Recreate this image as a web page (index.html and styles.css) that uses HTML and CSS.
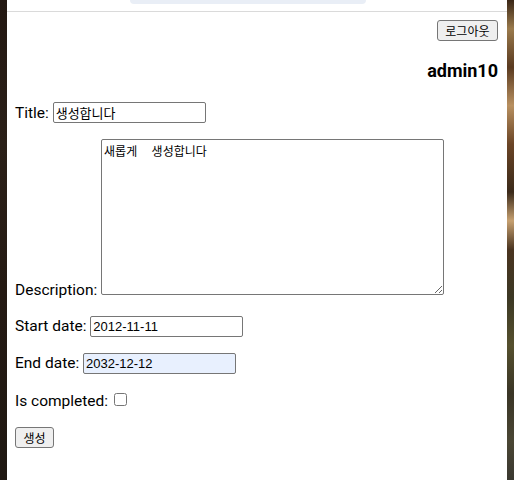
FILE: index.html
```html
<!DOCTYPE html>
<html lang="ko">
<head>
<meta charset="utf-8">
<title>Todo 생성</title>
<link rel="stylesheet" href="styles.css">
</head>
<body>
<div class="frame">
  <div class="side side-left"></div>
  <div class="main">
    <div class="topbar"><div class="pill"></div></div>
    <div class="content">
      <div class="header">
        <button class="btn" type="button">로그아웃</button>
        <div class="user">admin10</div>
      </div>
      <form class="form">
        <p class="row">Title: <input class="field" type="text" value="생성합니다"></p>
        <p class="row">Description: <textarea class="area">새롭게  생성합니다</textarea></p>
        <p class="row">Start date: <input class="field" type="text" value="2012-11-11"></p>
        <p class="row">End date: <input class="field autofill" type="text" value="2032-12-12"></p>
        <p class="row">Is completed: <input class="check" type="checkbox"></p>
        <p class="row"><button class="btn" type="button">생성</button></p>
      </form>
    </div>
  </div>
  <div class="side side-right"></div>
</div>
</body>
</html>
```

FILE: styles.css
```css
html, body {
  margin: 0;
  padding: 0;
  height: 100%;
}
body {
  font-family: Roboto, "Noto Sans CJK KR", sans-serif;
  font-size: 15.5px;
  color: #000;
  background: #1e150f;
}
.frame {
  display: flex;
  height: 480px;
  overflow: hidden;
}
.side {
  flex: 0 0 7px;
}
.side-left {
  background: linear-gradient(180deg, #231812 0%, #2b2018 30%, #251a13 60%, #1f1812 100%);
}
.side-right {
  background: linear-gradient(180deg,
    #3a2616 0%, #9a7a4c 6%, #5a3a20 14%, #b89060 22%, #6b4526 30%,
    #3b2a1a 40%, #c6a070 46%, #4a3420 52%, #3c3824 62%, #55502e 72%,
    #3a3526 82%, #4a4634 92%, #3a3830 100%);
}
.main {
  flex: 1 1 auto;
  background: #fff;
}
.topbar {
  height: 11px;
  border-bottom: 1px solid #dadada;
}
.pill {
  margin-left: 123px;
  width: 236px;
  height: 4px;
  background: #e9eef6;
  border-radius: 0 0 8px 8px;
}
.content {
  padding: 8px 9px 0 8px;
}
.header {
  text-align: right;
}
.user {
  margin-top: 19px;
  font-size: 18px;
  line-height: 22px;
  font-weight: bold;
}
.form {
  margin: 0;
  padding-top: 4px;
}
.row {
  margin: 16px 0;
  line-height: 20px;
}
.btn {
  font-family: "Noto Sans CJK KR", sans-serif;
  font-size: 12px;
  line-height: 15px;
  margin: 0;
  padding: 1px 7.5px;
  height: 21px;
  color: #000;
  background: #efefef;
  border: 1px solid #767676;
  border-radius: 3px;
}
.field {
  box-sizing: border-box;
  width: 153px;
  height: 21px;
  font-family: "Liberation Sans", "Noto Sans CJK KR", sans-serif;
  font-size: 13px;
  line-height: 15px;
  padding: 1px 2px;
  border: 1px solid #767676;
  border-radius: 2px;
  background: #fff;
  color: #000;
}
.autofill {
  background: #e8f0fe;
}
.area {
  box-sizing: border-box;
  width: 343px;
  height: 156px;
  font-family: "Liberation Mono", "Noto Sans CJK KR", monospace;
  font-size: 12px;
  border: 1px solid #767676;
  border-radius: 2px;
  padding: 2px;
}
.check {
  width: 13px;
  height: 13px;
  margin-left: 2px;
}
```
